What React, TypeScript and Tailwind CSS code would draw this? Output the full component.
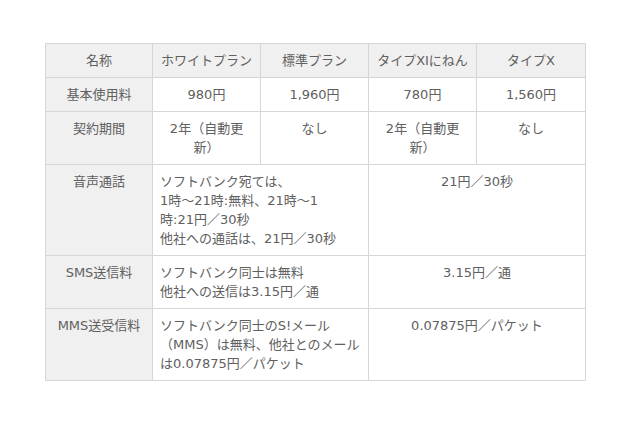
const headers = ["名称", "ホワイトプラン", "標準プラン", "タイプXIにねん", "タイプX"];

const simpleRows: { label: string; cells: string[][] }[] = [
  { label: "基本使用料", cells: [["980円"], ["1,960円"], ["780円"], ["1,560円"]] },
  {
    label: "契約期間",
    cells: [["2年（自動更", "新）"], ["なし"], ["2年（自動更", "新）"], ["なし"]],
  },
];

const spanRows: { label: string; detail: string[]; price: string }[] = [
  {
    label: "音声通話",
    detail: ["ソフトバンク宛ては、", "1時〜21時:無料、21時〜1", "時:21円／30秒", "他社への通話は、21円／30秒"],
    price: "21円／30秒",
  },
  {
    label: "SMS送信料",
    detail: ["ソフトバンク同士は無料", "他社への送信は3.15円／通"],
    price: "3.15円／通",
  },
  {
    label: "MMS送受信料",
    detail: ["ソフトバンク同士のS!メール", "（MMS）は無料、他社とのメール", "は0.07875円／パケット"],
    price: "0.07875円／パケット",
  },
];

function Lines({ lines }: { lines: string[] }) {
  return (
    <>
      {lines.map((line, i) => (
        <span key={i} className="block whitespace-nowrap">
          {line}
        </span>
      ))}
    </>
  );
}

const cell = "border border-[#d6d6d6] px-[7px] py-[7px] align-top leading-[19px]";

export default function App() {
  return (
    <div className="min-h-[426px] bg-white pl-[45px] pt-[43px] text-[13px] text-[#606060] [font-family:'DejaVu_Sans','Noto_Sans_CJK_JP',sans-serif]">
      <table className="w-[540px] table-fixed border-collapse">
        <colgroup>
          <col className="w-[107px]" />
          <col className="w-[108px]" />
          <col className="w-[108px]" />
          <col className="w-[108px]" />
          <col className="w-[109px]" />
        </colgroup>
        <thead>
          <tr>
            {headers.map((h) => (
              <th key={h} className={`${cell} bg-[#f0f0f0] text-center font-normal`}>
                {h}
              </th>
            ))}
          </tr>
        </thead>
        <tbody>
          {simpleRows.map((row) => (
            <tr key={row.label}>
              <td className={`${cell} bg-[#f0f0f0] text-center`}>{row.label}</td>
              {row.cells.map((c, i) => (
                <td key={i} className={`${cell} text-center`}>
                  <Lines lines={c} />
                </td>
              ))}
            </tr>
          ))}
          {spanRows.map((row) => (
            <tr key={row.label}>
              <td className={`${cell} bg-[#f0f0f0] text-center`}>{row.label}</td>
              <td colSpan={2} className={`${cell} text-left`}>
                <Lines lines={row.detail} />
              </td>
              <td colSpan={2} className={`${cell} text-center`}>
                {row.price}
              </td>
            </tr>
          ))}
        </tbody>
      </table>
    </div>
  );
}
